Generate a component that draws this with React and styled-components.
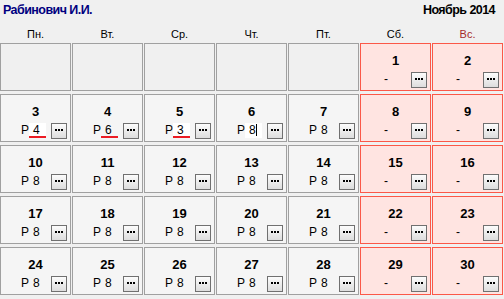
import React from "react";
import styled, { createGlobalStyle, css } from "styled-components";

const Global = createGlobalStyle`
  html, body { margin: 0; padding: 0; background: #f0f0f0; }
  body { font-family: "Liberation Sans", Arial, sans-serif; }
`;

const Page = styled.div`
  width: 504px;
  height: 299px;
  overflow: hidden;
  background: #f0f0f0;
`;

const TopBar = styled.div`
  display: flex;
  justify-content: space-between;
  align-items: flex-start;
  height: 23px;
  padding: 0 9px 0 3px;
  box-sizing: border-box;
  line-height: 20px;
  font-size: 12.5px;
  letter-spacing: -0.55px;
  font-weight: bold;
`;

const Person = styled.span`
  color: #000080;
`;

const Month = styled.span`
  color: #000;
`;

const WeekRow = styled.div`
  display: grid;
  grid-template-columns: repeat(7, 71px);
  column-gap: 1px;
  height: 20px;
  line-height: 22px;
  font-size: 11px;
`;

const WeekDay = styled.div`
  text-align: center;
  color: ${(p) => (p.$sunday ? "#a52a2a" : "#000")};
`;

const Grid = styled.div`
  display: grid;
  grid-template-columns: repeat(7, 71px);
  grid-auto-rows: 48px;
  column-gap: 1px;
  row-gap: 3px;
`;

const Cell = styled.div`
  box-sizing: border-box;
  display: flex;
  flex-direction: column;
  padding-top: 9px;
  border: 1px solid #a0a0a0;
  background: #f5f5f5;
  ${(p) =>
    p.$empty &&
    css`
      background: #f0f0f0;
    `}
  ${(p) =>
    p.$weekend &&
    css`
      border-color: #fb5848;
      background: #ffe4e1;
    `}
`;

const DayNum = styled.div`
  text-align: center;
  font-size: 13px;
  font-weight: bold;
  line-height: 16px;
  height: 16px;
  color: #000;
`;

const Bottom = styled.div`
  display: flex;
  align-items: flex-start;
  height: 16px;
  margin-top: 3px;
  padding: 0 3px 0 20px;
  font-size: 12px;
  color: #000;
`;

const Label = styled.span`
  width: 8px;
  line-height: 15px;
  white-space: nowrap;
`;

const Dash = styled.span`
  margin-left: 3px;
  line-height: 15px;
`;

const ValueBox = styled.span`
  box-sizing: border-box;
  width: 17px;
  height: 15px;
  padding-left: 4px;
  line-height: 14px;
  white-space: nowrap;
  background: ${(p) => (p.$active ? "#ffffff" : "transparent")};
  ${(p) =>
    p.$flag &&
    css`
      box-shadow: inset 0 -2px 0 #ec1c24;
    `}
`;

const Caret = styled.span`
  display: inline-block;
  width: 1px;
  height: 12px;
  background: #000;
  vertical-align: -2px;
`;

const DotsButton = styled.span`
  box-sizing: border-box;
  width: 16px;
  height: 16px;
  margin-left: auto;
  border: 1px solid #707070;
  background: linear-gradient(#fcfcfc, #dddddd);
  display: flex;
  svg {
    display: block;
  }
`;

const Dots = () => (
  <DotsButton>
    <svg width="14" height="14" viewBox="0 0 14 14">
      <rect x="3" y="5" width="2" height="2" fill="#000" />
      <rect x="6" y="5" width="2" height="2" fill="#000" />
      <rect x="9" y="5" width="2" height="2" fill="#000" />
    </svg>
  </DotsButton>
);

const days = ["Пн.", "Вт.", "Ср.", "Чт.", "Пт.", "Сб.", "Вс."];

const special = {
  3: { v: "4", active: true, flag: true },
  4: { v: "6", active: false, flag: true },
  5: { v: "3", active: true, flag: true },
  6: { v: "8", active: true, caret: true },
};

const cells = [];
for (let i = 0; i < 5; i++) cells.push({ empty: true });
for (let d = 1; d <= 30; d++) {
  const col = cells.length % 7;
  cells.push({ day: d, weekend: col >= 5 });
}

export default function App() {
  return (
    <Page>
      <Global />
      <TopBar>
        <Person>Рабинович И.И.</Person>
        <Month>Ноябрь 2014</Month>
      </TopBar>
      <WeekRow>
        {days.map((d, i) => (
          <WeekDay key={d} $sunday={i === 6}>
            {d}
          </WeekDay>
        ))}
      </WeekRow>
      <Grid>
        {cells.map((c, i) => {
          if (c.empty) return <Cell key={i} $empty />;
          const s = special[c.day] || { v: "8" };
          return (
            <Cell key={i} $weekend={c.weekend}>
              <DayNum>{c.day}</DayNum>
              <Bottom>
                {c.weekend ? (
                  <Dash>-</Dash>
                ) : (
                  <>
                    <Label>Р</Label>
                    <ValueBox $active={s.active} $flag={s.flag}>
                      {s.v}
                      {s.caret && <Caret />}
                    </ValueBox>
                  </>
                )}
                <Dots />
              </Bottom>
            </Cell>
          );
        })}
      </Grid>
    </Page>
  );
}
